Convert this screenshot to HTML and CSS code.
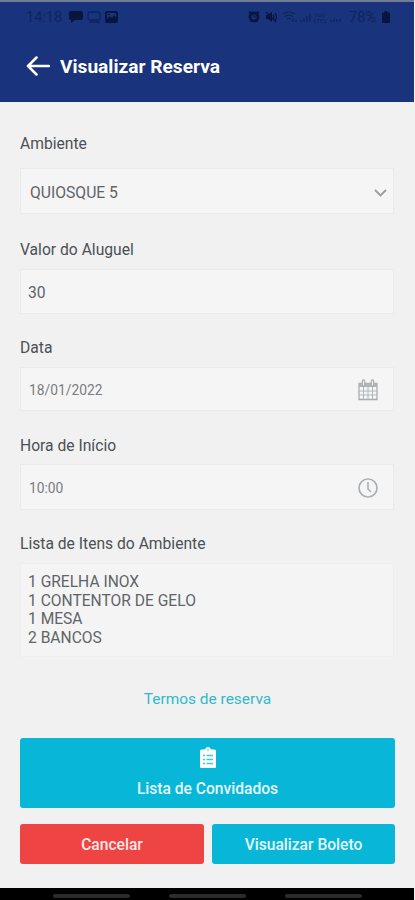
FILE: index.html
```html
<!DOCTYPE html>
<html lang="pt-BR">
  <head>
    <meta charset="UTF-8" />
    <meta name="viewport" content="width=device-width, initial-scale=1.0" />
    <title>Visualizar Reserva</title>
    <link rel="stylesheet" href="styles.css">
  </head>
  <body>
    <header class="header">
      <div class="status-bar">
        <span class="time">14:18</span>
        <svg class="status-icon" width="14" height="12" viewBox="0 0 14 12">
          <path d="M2 0h10q2 0 2 2v5q0 2-2 2H6l-4 3V9Q0 9 0 7V2Q0 0 2 0z" fill="currentColor" />
        </svg>
        <svg class="status-icon faded" width="14" height="12" viewBox="0 0 14 12">
          <path d="M3 1h8q2 0 2 2v5q0 1-2 1H3Q1 9 1 8V3q0-2 2-2zM2 11h11" fill="none" stroke="currentColor" stroke-width="1.3" />
        </svg>
        <svg class="status-icon" width="13" height="12" viewBox="0 0 13 12">
          <path fill-rule="evenodd" d="M2 0h9q2 0 2 2v8q0 2-2 2H2q-2 0-2-2V2Q0 0 2 0zM2 2v6l3-3 2 2 2-3 2 3V2zM3 3h2v1H3z" fill="currentColor" />
        </svg>
        <div class="status-right">
          <svg width="12" height="12" viewBox="0 0 12 12">
            <path d="M1 2l2-1M9 1l2 1" stroke="currentColor" stroke-width="2" />
            <circle cx="6" cy="6" r="4" fill="none" stroke="currentColor" stroke-width="2.8" />
            <path d="M6 4v2h2M2 11l1-1M10 11L9 10" fill="none" stroke="currentColor" />
          </svg>
          <svg width="12" height="12" viewBox="0 0 12 12">
            <path d="M1 4h2l4-3v10L3 8H1z" fill="currentColor" />
            <path d="M1 1l10 10M8 4q2 2 0 4M10 2q3 4 0 8" fill="none" stroke="currentColor" stroke-width="1.2" />
          </svg>
          <svg class="signal" width="62" height="12" viewBox="0 0 62 12">
            <path d="M1 3q6-4 12 0M3 5.500q4-2.500 8 0M5 8q2-1.500 4 0M11 8v3M14 9v2M19 9v2M22 7v4M25 5v6M28 2v9M49 9v2M52 8v3M55 8v3M58 8v3" fill="none" stroke="currentColor" stroke-width="1.200" />
            <text x="32" y="6" font-size="6">VoI)</text>
            <text x="32" y="11.500" font-size="6">LTE2</text>
          </svg>
          <span class="battery-text">78%</span>
          <svg width="8" height="12" viewBox="0 0 8 12">
            <path d="M2.500 0h3v1.500H7q1 0 1 1V11q0 1-1 1H1q-1 0-1-1V2.500q0-1 1-1h1.500z" fill="currentColor" />
          </svg>
        </div>
      </div>
      <div class="title-bar">
        <svg class="back" width="24" height="20" viewBox="0 0 24 20">
          <path d="M10.500 1.500L2 10l8.500 8.500M2.500 10H23" fill="none" stroke="#fff" stroke-width="2.500" stroke-linecap="round" stroke-linejoin="round" />
        </svg>
        <h1>Visualizar Reserva</h1>
      </div>
    </header>

    <main class="content">
      <div class="form-group ambiente">
        <div class="label">Ambiente</div>
        <div class="field select">
          <span>QUIOSQUE 5</span>
          <svg width="13" height="8" viewBox="0 0 13 8">
            <path d="M1 1l5.500 5.500L12 1" fill="none" stroke="#9a9c9d" stroke-width="1.800" />
          </svg>
        </div>
      </div>

      <div class="form-group valor">
        <div class="label">Valor do Aluguel</div>
        <div class="field"><span>30</span></div>
      </div>

      <div class="form-group data">
        <div class="label">Data</div>
        <div class="field with-icon">
          <span>18/01/2022</span>
          <svg width="20" height="22" viewBox="0 0 20 22">
            <path d="M1 4.500h18v16H1z" fill="none" stroke="#a9adb0" stroke-width="1.300" />
            <path d="M1 4.500h18v3.500H1z" fill="#b2b6b8" />
            <path d="M1 12h18M1 16h18M5.500 8v12.500M10 8v12.500M14.500 8v12.500" stroke="#b2b6b8" />
            <path d="M5.500 2v4M14.500 2v4" stroke="#a4a8ab" stroke-width="3.400" stroke-linecap="round" />
            <path d="M5.500 2v4M14.500 2v4" stroke="#f4f5f6" stroke-width="1.200" stroke-linecap="round" />
          </svg>
        </div>
      </div>

      <div class="form-group hora">
        <div class="label">Hora de Início</div>
        <div class="field with-icon">
          <span>10:00</span>
          <svg width="20" height="20" viewBox="0 0 20 20">
            <circle cx="10" cy="10" r="9" fill="none" stroke="#abafb1" stroke-width="1.700" />
            <path d="M10 4v7l3 3" fill="none" stroke="#abafb1" stroke-width="1.600" />
          </svg>
        </div>
      </div>

      <div class="form-group itens">
        <div class="label">Lista de Itens do Ambiente</div>
        <div class="field list">
          1 GRELHA INOX<br />
          1 CONTENTOR DE GELO<br />
          1 MESA<br />
          2 BANCOS
        </div>
      </div>

      <a class="terms">Termos de reserva</a>

      <button class="btn guests" type="button">
        <svg width="16" height="21" viewBox="0 0 16 21">
          <path d="M1.500 2.500H5Q5.500 0 8 0t3 2.500h3.500Q16 2.500 16 4v15.500q0 1.500-1.500 1.500h-13Q0 21 0 19.500V4q0-1.500 1.500-1.500z" fill="#fff" />
          <path d="M3 8.500h2M6.500 8.500H13M3 12.500h2M6.500 12.500H13M3 16.500h2M6.500 16.500H13" stroke="#45c5dd" stroke-width="1.500" />
          <circle cx="8" cy="3" r="1" fill="#8bdce9" />
        </svg>
        <span>Lista de Convidados</span>
      </button>

      <div class="actions">
        <button class="btn cancel" type="button">Cancelar</button>
        <button class="btn" type="button">Visualizar Boleto</button>
      </div>
    </main>

    <footer class="nav-bar">
      <span></span>
      <span></span>
      <span></span>
    </footer>
  </body>
</html>
```

FILE: styles.css
```css
* {
  box-sizing: border-box;
}
body {
  margin: 0;
  width: 415px;
  height: 900px;
  display: flex;
  flex-direction: column;
  overflow: hidden;
  background: #f1f1f1;
  font-family: Roboto, sans-serif;
  color: #4b5055;
}
svg {
  display: block;
  flex: none;
}
.header {
  height: 102px;
  margin-right: 1px;
  flex: none;
  background: #19337c;
  border-top: 2px solid #727a94;
}
.status-bar {
  display: flex;
  align-items: center;
  height: 28px;
  padding: 2px 24px 0 26px;
  color: #07163f;
}
.time {
  width: 37px;
  margin-right: 6px;
  font-size: 14.5px;
  color: #10245f;
}
.status-icon {
  margin-right: 4px;
}
.faded {
  opacity: 0.5;
}
.status-right {
  display: flex;
  align-items: center;
  gap: 5px;
  margin-left: auto;
}
.signal {
  opacity: 0.55;
}
.signal text {
  fill: currentColor;
}
.battery-text {
  margin-right: -4px;
  width: 32px;
  font-size: 14.5px;
  color: #10245f;
}
.title-bar {
  display: flex;
  align-items: center;
  height: 72px;
  padding-left: 26px;
}
h1 {
  margin: 1px 0 0 10px;
  font-size: 19.15px;
  line-height: 24px;
  font-weight: 700;
  color: #fff;
}
.content {
  display: flex;
  flex-direction: column;
  flex: 1;
  padding: 32px 20px 0 20px;
}
.label {
  height: 20px;
  line-height: 22px;
  margin-bottom: 10px;
  font-size: 15.65px;
}
.field {
  display: flex;
  align-items: center;
  justify-content: space-between;
  height: 46px;
  padding: 2px 8px 0 7px;
  background: #f5f5f5;
  border: 1px solid #ebebec;
  font-size: 15.7px;
  color: #606467;
}
.form-group {
  margin: 0 1px 23px 0;
}
.ambiente {
  margin-bottom: 25px;
}
.ambiente .label {
  line-height: 20px;
  margin-bottom: 14px;
}
.select {
  padding: 3px 6px 0 9px;
}
.valor .field {
  height: 45px;
}
.with-icon {
  padding: 1px 15px 0 8px;
  font-size: 13.8px;
  color: #797d80;
}
.data {
  margin-bottom: 24px;
}
.data .field {
  height: 44px;
}
.hora .label {
  margin-bottom: 9px;
}
.itens {
  margin-bottom: 31px;
}
.list {
  display: block;
  height: 94px;
  padding-top: 9px;
  line-height: 18.67px;
  background: #f4f4f4;
  border-color: #eeeeef;
  font-size: 15.6px;
}
.terms {
  height: 20px;
  line-height: 22px;
  margin-bottom: 30px;
  font-size: 15.45px;
  text-align: center;
  color: #32b9cc;
}
.btn {
  padding: 1px 0 0;
  border: none;
  border-radius: 3px;
  background: #08b7d8;
  font-family: inherit;
  font-size: 15.6px;
  font-weight: 500;
  color: #e5f7fa;
}
.guests {
  display: flex;
  flex-direction: column;
  align-items: center;
  height: 70px;
  padding-top: 9px;
  margin-bottom: 16px;
}
.guests span {
  margin-top: 11px;
  line-height: 20px;
}
.actions {
  display: grid;
  grid-template-columns: 184px 183px;
  gap: 8px;
  height: 40px;
}
.cancel {
  background: #ef4444;
  color: #fde9e7;
}
.nav-bar {
  display: flex;
  gap: 39px;
  flex: none;
  height: 12px;
  margin-right: 1px;
  padding: 6px 0 0 53px;
  background: #000;
}
.nav-bar span {
  width: 77px;
  height: 4px;
  border-radius: 2px;
  background: #2c2c2c;
}
```
